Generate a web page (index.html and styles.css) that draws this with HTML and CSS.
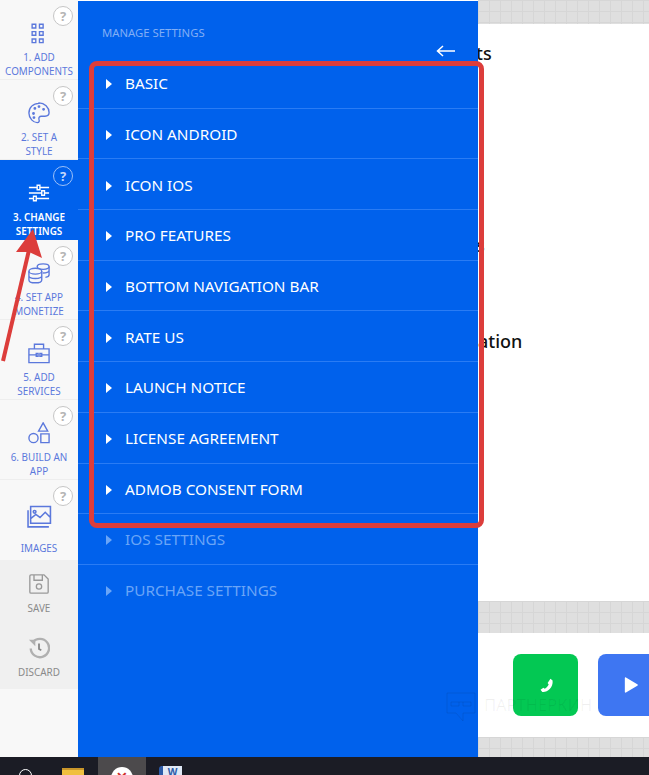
FILE: index.html
```html
<!DOCTYPE html>
<html lang="en">
<head>
  <meta charset="UTF-8">
  <title>Manage Settings</title>
  <link rel="stylesheet" href="styles.css">
</head>
<body>

  <div class="app">
    <div class="sidebar">
      <div class="step">
        <span class="help">?</span>
        <svg class="step-icon" viewBox="0 0 24 24"><path d="M4.500 2.500h4v4h-4zM12.500 2.500h4v4h-4zM4.500 10.500h4v4h-4zM12.500 10.500h4v4h-4zM4.500 18.500h4v4h-4zM12.500 18.500h4v4h-4z"/></svg>
        <div class="step-label">1. ADD<br>COMPONENTS</div>
      </div>
      <div class="step">
        <span class="help">?</span>
        <svg class="step-icon" viewBox="0 0 24 24"><path d="M12 1.500C5.500 1.500 1 6 1 12c0 6 5 10.500 9 10.500 2.500 0 2.500-2 2-3.500-.6-2 .5-3.500 2.500-3.500h4c3 0 4.500-2 4.500-4 0-5.500-5-10.500-11-10.500z"/><circle cx="6" cy="12.500" r=".8"/><circle cx="7.500" cy="7" r=".8"/><circle cx="12" cy="5" r=".8"/><circle cx="17" cy="8" r=".8"/><circle cx="6.500" cy="17" r=".8"/></svg>
        <div class="step-label">2. SET A<br>STYLE</div>
      </div>
      <div class="step active">
        <span class="help">?</span>
        <svg class="step-icon" viewBox="0 0 24 24"><path d="M1 6h9M13 6h10M1 12h14M18 12h5M1 18h5M9 18h14M10 3.500h3v5h-3zM15 9.500h3v5h-3zM6 15.500h3v5H6z"/></svg>
        <div class="step-label">3. CHANGE<br>SETTINGS</div>
      </div>
      <div class="step">
        <span class="help">?</span>
        <svg class="step-icon" viewBox="0 0 24 24"><ellipse cx="16.500" cy="5" rx="6.500" ry="3"/><path d="M16 12c4 0 7-1 7-3V5M23 9v5c0 1.500-1.500 2.500-4 2.800"/><ellipse cx="8" cy="10" rx="7" ry="3.200"/><path d="M1 10v9.500c0 2 3 3.200 7 3.200s7-1.200 7-3.200V10M1 15c0 2 3 3 7 3s7-1 7-3"/></svg>
        <div class="step-label">4. SET APP<br>MONETIZE</div>
      </div>
      <div class="step">
        <span class="help">?</span>
        <svg class="step-icon" viewBox="0 0 24 24"><path d="M1 7.500h22v15H1zM7 7.500V2.500h10v5M1 14h8M15 14h8M9 12.500h2v3H9zM13 12.500h2v3h-2z"/></svg>
        <div class="step-label">5. ADD<br>SERVICES</div>
      </div>
      <div class="step">
        <span class="help">?</span>
        <svg class="step-icon" viewBox="0 0 24 24"><path d="M16.500 1L21.500 10H11.500zM14 13h9v9.500h-9z"/><circle cx="6" cy="17.500" r="5"/></svg>
        <div class="step-label">6. BUILD AN<br>APP</div>
      </div>
      <div class="step step-images">
        <span class="help">?</span>
        <svg class="step-icon" viewBox="0 0 24 24"><path d="M3.500 1.500h19v16h-19zM1 5v16h20M3.500 13l5-4 4 3 5-5 5 5M6 6.500a1.300 1.300 0 1 0 2.600 0a1.300 1.300 0 1 0-2.600 0"/></svg>
        <div class="step-label">IMAGES</div>
      </div>
      <div class="actions">
        <div class="action">
          <svg class="action-icon" viewBox="0 0 24 24"><path d="M1 2.500a1.500 1.500 0 0 1 1.500-1.500H18l5 5v15.500a1.500 1.500 0 0 1-1.500 1.500h-19A1.500 1.500 0 0 1 1 21.500zM6 1v6.500h10V1"/><circle cx="12" cy="15" r="3.200"/></svg>
          <div class="action-label">SAVE</div>
        </div>
        <div class="action">
          <svg class="action-icon discard" viewBox="0 0 24 24"><path d="M5 6a10 10 0 1 1-2 6.500"/><path class="solid" d="M1 3h7v7z"/><path class="hand" d="M12 7v6l2.500 1.500"/></svg>
          <div class="action-label">DISCARD</div>
        </div>
      </div>
    </div>

    <div class="main">
      <div class="grid-strip strip-top"></div>
      <div class="page">
        <div class="page-text first">ts</div>
        <div class="page-text second">s</div>
        <div class="page-text third">ation</div>
      </div>
      <div class="grid-strip strip-mid"></div>
      <div class="bottom-bar">
        <div class="round-btn green">
          <svg viewBox="0 0 24 24" class="btn-icon"><path d="M19 2.500l3 2.500c.5 5-1 9-4 12s-7 4.500-10.500 4l-2.500-3 4-3 2 1.500c2-1 4.500-3.500 5.500-6l-1.500-2z"/></svg>
        </div>
        <div class="round-btn blue">
          <svg viewBox="0 0 24 24" class="btn-icon"><path d="M4 1.500c0-1 .8-1.300 1.600-.9l16 9.500c1 .6 1 1.700 0 2.300l-16 9.500c-.8.4-1.600.1-1.600-.9z"/></svg>
        </div>
      </div>
      <div class="grid-strip strip-bottom"></div>
    </div>

    <div class="panel">
      <div class="panel-title">MANAGE SETTINGS</div>
      <svg class="back" viewBox="0 0 20 12"><path d="M19 6H2M7 1L1.500 6L7 11"/></svg>
      <div id="settingsList" class="settings-list">
        <div class="setting"><span class="caret"></span>BASIC</div>
        <div class="setting"><span class="caret"></span>ICON ANDROID</div>
        <div class="setting"><span class="caret"></span>ICON IOS</div>
        <div class="setting"><span class="caret"></span>PRO FEATURES</div>
        <div class="setting"><span class="caret"></span>BOTTOM NAVIGATION BAR</div>
        <div class="setting"><span class="caret"></span>RATE US</div>
        <div class="setting"><span class="caret"></span>LAUNCH NOTICE</div>
        <div class="setting"><span class="caret"></span>LICENSE AGREEMENT</div>
        <div class="setting"><span class="caret"></span>ADMOB CONSENT FORM</div>
        <div class="setting off"><span class="caret"></span>IOS SETTINGS</div>
        <div class="setting off"><span class="caret"></span>PURCHASE SETTINGS</div>
      </div>
    </div>
  </div>

  <div class="taskbar">
    <span class="search-ring"></span>
    <span class="folder"></span>
    <span class="task-active"><span class="red-app">✕</span></span>
    <span class="word-app">W</span>
  </div>

  <!-- annotations and watermark drawn over the screenshot -->
  <div class="watermark">
    <svg class="watermark-icon" viewBox="0 0 30 32"><path d="M1 1h28v20H17v8l-7-8H1zM5 10h20M5 10v4h8v-4M17 10v4h8v-4"/></svg>
    <span>ПАРТНЕРКИН</span>
  </div>
  <div class="red-box"></div>
  <svg class="red-arrow" viewBox="0 0 50 140"><path class="arrow-line" d="M3 136L29 25"/><path class="arrow-head" d="M33 4L42 33L29 27L16 27z"/></svg>

</body>
</html>
```

FILE: styles.css
```css
html, body {
  margin: 0;
  padding: 0;
  height: 775px;
  overflow: hidden;
  font-family: "Noto Sans", sans-serif;
  background: #fff;
}

.app {
  display: flex;
  height: 757px;
}

/* Left steps */
.sidebar {
  width: 78px;
  flex: none;
  background: #f8f8f8;
}

.step {
  height: 80px;
  box-sizing: border-box;
  position: relative;
  border-bottom: 1px solid #eeeeee;
  text-align: center;
  padding-top: 22px;
  color: #5b78dc;
}

.step.active {
  background: #0061ec;
  color: #fff;
  font-weight: 600;
  border-bottom: none;
}

.step-images {
  padding-top: 25px;
  border-bottom: none;
}

.step-icon {
  display: block;
  width: 22px;
  height: 22px;
  margin: 0 auto;
  fill: none;
  stroke: #5b78dc;
  stroke-width: 1.500;
}

.step.active .step-icon {
  stroke: #fff;
}

.step-images .step-icon {
  width: 25px;
  height: 25px;
}

.step-label {
  font-size: 9.900px;
  line-height: 14px;
  margin-top: 6px;
}

.step-images .step-label {
  margin-top: 11px;
}

.help {
  position: absolute;
  top: 6px;
  right: 5px;
  width: 18px;
  height: 18px;
  border: 1px solid #c6c6c6;
  border-radius: 50%;
  background: #fff;
  color: #b5b5b5;
  font-size: 13px;
  font-weight: 700;
  line-height: 18px;
  text-align: center;
}

.step.active .help {
  background: #0061ec;
  border-color: #9cc0f8;
  color: #c4d9fb;
}

.actions {
  background: #f0f0f0;
  height: 129px;
  padding-top: 14px;
  box-sizing: border-box;
}

.action {
  height: 63px;
  text-align: center;
  color: #8a8a8a;
}

.action-icon {
  display: block;
  width: 20px;
  height: 20px;
  margin: 0 auto;
  fill: none;
  stroke: #999;
  stroke-width: 1.600;
}

.action-icon.discard {
  width: 22px;
  height: 22px;
  stroke: #b0b0b0;
  stroke-width: 2.600;
}

.action-icon .solid {
  fill: #b0b0b0;
  stroke: none;
}

.action-icon .hand {
  stroke: #888;
  stroke-width: 2;
}

.action-label {
  font-size: 9.900px;
  line-height: 14px;
  margin-top: 7px;
}

.action:last-child .action-label {
  margin-top: 6px;
}

/* Page behind the panel */
.main {
  flex: 1;
  display: flex;
  flex-direction: column;
  padding-left: 400px;
}

.grid-strip {
  background-color: #dfdfdf;
  background-image:
    linear-gradient(#d6d6d6 1px, transparent 1px),
    linear-gradient(90deg, #d6d6d6 1px, transparent 1px);
  background-size: 11px 11px;
}

.strip-top {
  height: 24px;
}

.strip-mid {
  height: 32px;
}

.strip-bottom {
  height: 20px;
}

.page {
  height: 577px;
  background: #fff;
}

.page-text {
  font-size: 18px;
  font-weight: 500;
  line-height: 24px;
  color: #111;
}

.page-text.first {
  margin: 17px 0 0 -2px;
}

.page-text.second {
  margin: 168px 0 0 -2px;
}

.page-text.third {
  margin: 72px 0 0 0;
}

.bottom-bar {
  height: 104px;
  background: #fff;
  display: flex;
  align-items: center;
  padding-left: 35px;
  gap: 20px;
}

.round-btn {
  flex: none;
  width: 65px;
  height: 62px;
  border-radius: 8px;
  display: flex;
  align-items: center;
  justify-content: center;
}

.round-btn.green {
  background: #03c853;
}

.round-btn.blue {
  background: #3e76f2;
}

.btn-icon {
  width: 17px;
  height: 17px;
  fill: #fff;
}

.watermark {
  position: absolute;
  left: 446px;
  top: 692px;
  display: flex;
  align-items: flex-start;
  gap: 8px;
  color: rgba(0, 0, 0, 0.06);
  font-size: 16.500px;
  line-height: 26px;
}

.watermark-icon {
  width: 30px;
  height: 32px;
  fill: none;
  stroke: rgba(0, 0, 0, 0.08);
  stroke-width: 1;
}

/* Settings panel */
.panel {
  position: absolute;
  left: 78px;
  top: 1px;
  width: 400px;
  height: 756px;
  background: #0061ec;
}

.panel-title {
  position: absolute;
  left: 24px;
  top: 25px;
  font-size: 11.300px;
  line-height: 14px;
  color: #80aef5;
}

.back {
  position: absolute;
  left: 358px;
  top: 44px;
  width: 20px;
  height: 12px;
  fill: none;
  stroke: #fff;
  stroke-width: 1.500;
}

.settings-list {
  padding-top: 57px;
}

.setting {
  height: 50.700px;
  box-sizing: border-box;
  border-bottom: 1px solid #2a7cf4;
  padding: 15.200px 0 0 28px;
  font-size: 15.300px;
  line-height: 20px;
  color: #fff;
}

.setting:last-child {
  border-bottom: none;
}

.setting.off {
  color: #6aa5f7;
}

.caret {
  display: inline-block;
  width: 0;
  height: 0;
  margin-right: 13px;
  border-left: 6px solid #fff;
  border-top: 5.500px solid transparent;
  border-bottom: 5.500px solid transparent;
}

.setting.off .caret {
  border-left-color: #6aa5f7;
}

/* Windows taskbar */
.taskbar {
  height: 18px;
  background: #1b1c25;
  position: relative;
  overflow: hidden;
}

.search-ring {
  position: absolute;
  left: 19px;
  top: 12px;
  width: 11px;
  height: 11px;
  border: 1.500px solid #fff;
  border-radius: 50%;
}

.folder {
  position: absolute;
  left: 62px;
  top: 11px;
  width: 22px;
  height: 16px;
  background: #f0c040;
  border-top: 2px solid #c9962a;
}

.task-active {
  position: absolute;
  left: 98px;
  top: 0;
  width: 48px;
  height: 18px;
  background: #4c4a4c;
}

.red-app {
  position: absolute;
  left: 13px;
  top: 10px;
  width: 22px;
  height: 22px;
  border-radius: 50%;
  background: #fff;
  color: #cf2a2a;
  font-size: 14px;
  font-weight: 700;
  line-height: 20px;
  text-align: center;
}

.word-app {
  position: absolute;
  left: 159px;
  top: 9px;
  width: 19px;
  height: 16px;
  background: #dfe8f5;
  border-left: 4px solid #2c5aa8;
  border-radius: 3px 0 0 0;
  color: #2c5aa8;
  font-size: 10px;
  font-weight: 700;
  line-height: 12px;
  text-align: center;
}

/* Red annotations */
.red-box {
  position: absolute;
  left: 89px;
  top: 61px;
  width: 395px;
  height: 467px;
  box-sizing: border-box;
  border: 5px solid #dc3d3b;
  border-radius: 8px;
}

.red-arrow {
  position: absolute;
  left: 0;
  top: 225px;
  width: 50px;
  height: 140px;
}

.arrow-line {
  stroke: #dc3d3b;
  stroke-width: 4;
  fill: none;
}

.arrow-head {
  fill: #dc3d3b;
}
```
